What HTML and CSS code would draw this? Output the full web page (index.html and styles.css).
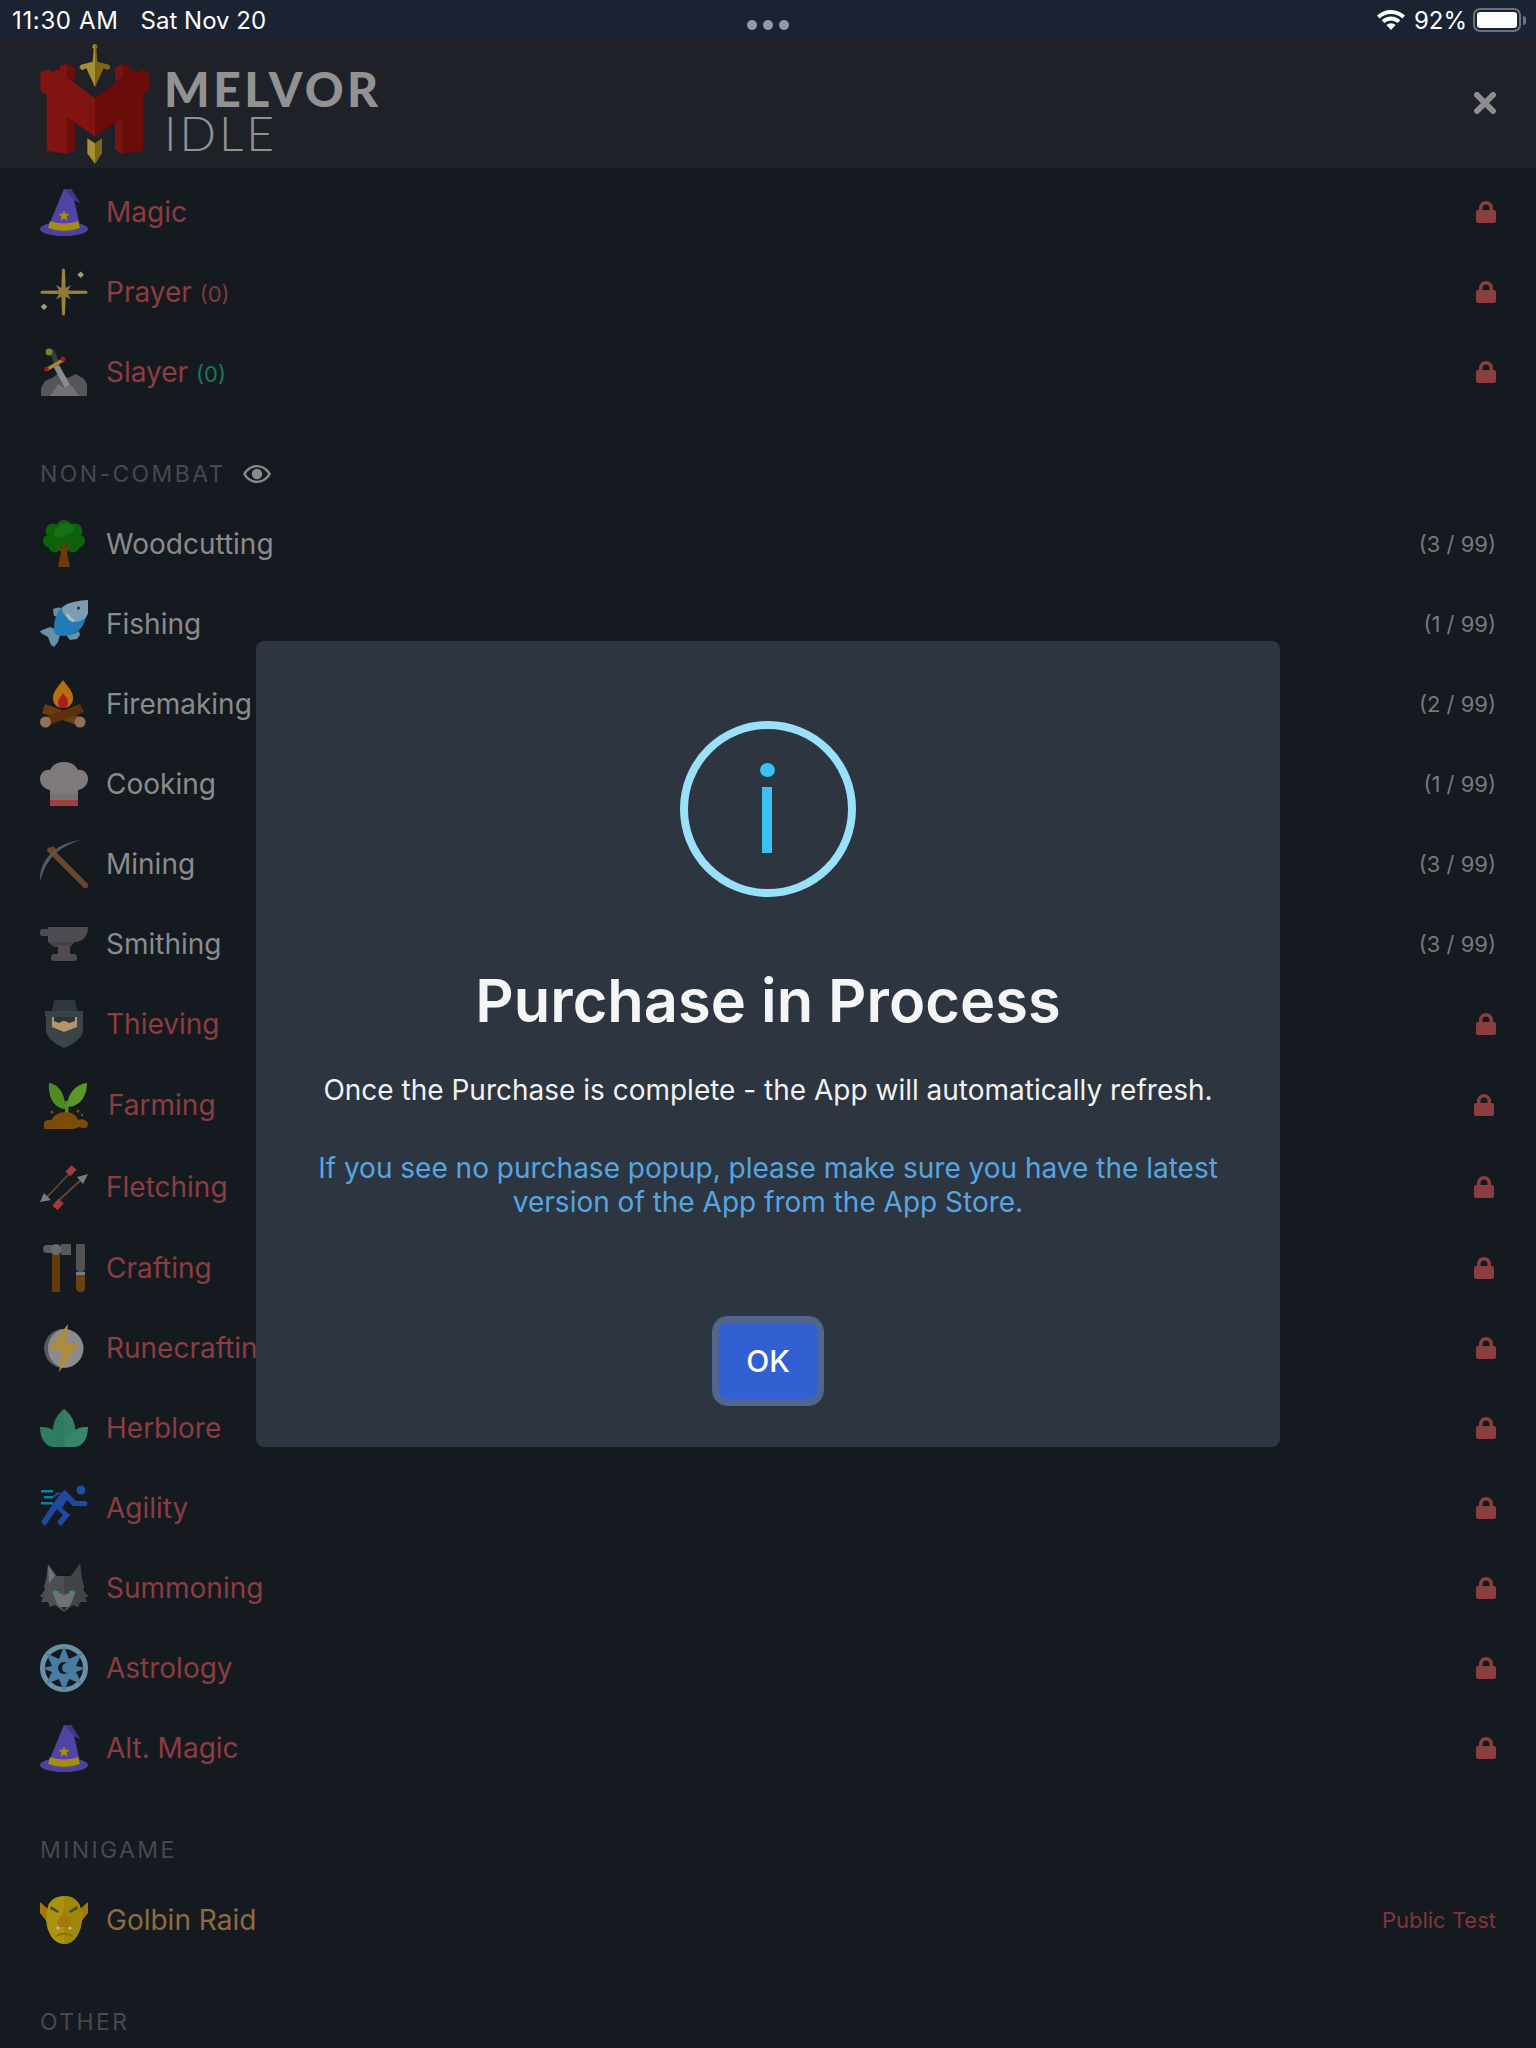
FILE: index.html
```html
<!DOCTYPE html>
<html lang="en">
<head>
<meta charset="utf-8">
<title>Melvor Idle</title>
<link rel="stylesheet" href="styles.css">
</head>
<body>
<svg class="defs" width="0" height="0" aria-hidden="true">
  <defs>
    <symbol id="i-lock" viewBox="0 0 20 22"><path fill="currentColor" d="M3 9V7a7 7 0 0 1 14 0v2h1a2 2 0 0 1 2 2v9a2 2 0 0 1-2 2H2a2 2 0 0 1-2-2v-9a2 2 0 0 1 2-2zm3.500 0h7V7a3.500 3.500 0 0 0-7 0z"/></symbol>
    <symbol id="i-magic" viewBox="0 0 48 48">
      <ellipse cx="24" cy="41" rx="24" ry="7" fill="#4d429c"/>
      <path d="M9 37 24 1h7l9 14-6-3 6 25q-16 6-31 0z" fill="#4f45a3"/>
      <path d="M24 1h7l9 14-6-3-4-5z" fill="#3f3688"/>
      <path d="M10 33q14 5 28 0l2 7q-16 6-32 0z" fill="#a58a18"/>
      <path d="m24 22 1.600 3.800 4 .3-3 2.700 1 4-3.600-2.200-3.600 2.200 1-4-3-2.700 4-.3z" fill="#a58a18"/>
    </symbol>
    <symbol id="i-prayer" viewBox="0 0 48 48">
      <path d="M22 2a1.500 1.500 0 0 1 3 0l.7 20.500L46 22.800a1.500 1.500 0 0 1 0 3l-20.300.3L25 46a1.500 1.500 0 0 1-3 0l-.7-19.900L2 25.800a1.500 1.500 0 0 1 0-3l19.300-.3z" fill="#9c843a"/>
      <path d="m23.500 15 2 5 5.500-3-3 5.500 5.500 1.800-5.500 1.800 3 5.500-5.500-3-2 5-2-5-5.500 3 3-5.500-5.500-1.800 5.500-1.800-3-5.500 5.500 3z" fill="#917a34"/>
      <path d="m40.700 3.500 3.300 3.300-3.300 3.300-3.300-3.300zM4 35.500l3.300 3.300L4 42.100.7 38.800z" fill="#a89c78"/>
    </symbol>
    <symbol id="i-slayer" viewBox="0 0 48 48">
      <path d="M1 48v-8l4-7 7-3 7-5 9 5 8-4 8 5 3 5v12z" fill="#56565a"/>
      <path d="M10 48l8-12 7 4 6-3 8 11z" fill="#727274"/>
      <path d="m13 18 5-3 12 22-5 3z" fill="#8a8a90"/>
      <path d="m9 2 5-.5 6 15-5 2z" fill="#3c3c40"/>
      <circle cx="9" cy="4" r="3.400" fill="#6f8a22"/>
      <path d="M6 20 23 10l1.500 3-17 10z" fill="#a98a26"/>
      <circle cx="6.500" cy="21" r="2.400" fill="#9c1c20"/><circle cx="23" cy="11" r="2.400" fill="#9c1c20"/>
    </symbol>
    <symbol id="i-wood" viewBox="0 0 48 48">
      <g fill="#0e620b">
        <circle cx="24" cy="8" r="8"/><circle cx="13" cy="11" r="7.500"/><circle cx="35" cy="11" r="7.500"/>
        <circle cx="9.500" cy="21" r="6.500"/><circle cx="38.500" cy="21" r="6.500"/><circle cx="24" cy="17" r="11"/>
        <circle cx="15" cy="26" r="6.500"/><circle cx="33" cy="26" r="6.500"/>
      </g>
      <path d="M22 4c6-2 11 0 13 3-2 5-8 8-14 10-5 1-8-1-7-5 1-3 4-6 8-8z" fill="#177215"/>
      <path d="M18 47l3-15-7-9 8 6 2-8 2 7 6-7-5 12 3 14z" fill="#6b3c09"/>
    </symbol>
    <symbol id="i-fish" viewBox="0 0 48 48">
      <path d="M17 30 10 27 0 31l1 2 7 4 3 8 3 2 4-5 2-7z" fill="#6a90a8"/>
      <path d="M14 16q-1-6-1-7 6-3 11 0l-4 8zM33 34l6-3 1 4-3 4-7 1-4-5z" fill="#6a90a8"/>
      <path d="M48 0C38 1 26 2 20 9 14 18 13 26 15 34c8 4 22 2 28-9 4-7 5-16 5-25z" fill="#1f7cb4"/>
      <path d="M48 0C38 1 28 2 22 8c0 6 4 8 8 13 8 3 16-1 18-8z" fill="#7b9cb3"/>
      <circle cx="38.500" cy="8" r="1.600" fill="#20303c"/>
      <path d="M28 13q2 5 7 7l-2 2q-5-2-7-7z" fill="#a8c0cf"/>
    </symbol>
    <symbol id="i-fire" viewBox="0 0 48 48">
      <path d="M23 0c4 6 10 11 10 18 0 6-4 10-10 10s-10-4-10-10c0-7 6-12 10-18z" fill="#b66f0c"/>
      <path d="M23 13c3 4 5 6 5 10 0 3-2 5-5 5s-5-2-5-5c0-4 3-6 5-10z" fill="#a81c1b"/>
      <path d="M5 24 44 38l-4 8L2 33z" fill="#6e3b0e"/>
      <path d="M40 24 3 38l4 8 37-14z" fill="#5c300b"/>
      <ellipse cx="5.500" cy="42" rx="5.500" ry="5.500" fill="#8f7358"/><ellipse cx="40" cy="42" rx="5.500" ry="5.500" fill="#8f7358"/>
    </symbol>
    <symbol id="i-cook" viewBox="0 0 48 48">
      <path d="M10 30C4 29 0 24 0 19c0-6 5-10 10-9 3-6 8-8 14-8s11 2 14 8c5-1 10 3 10 9 0 5-4 10-10 11v10H10z" fill="#7e797b"/>
      <path d="M10 34h28v6H10z" fill="#767173"/>
      <path d="M10 40h28v6H10z" fill="#a23c3d"/>
    </symbol>
    <symbol id="i-mine" viewBox="0 0 48 48">
      <path d="M10 10 45.500 45.500" stroke="#6d452a" stroke-width="5.500" stroke-linecap="round" fill="none"/>
      <path d="M0 41C-1 22 14 3 41 0 28 4 18 10 12 17 6 24 3 32 0 41z" fill="#4c5d5e"/>
      <path d="M10 9 14 13 17 10 13 6z" fill="#6d452a"/>
    </symbol>
    <symbol id="i-anvil" viewBox="0 0 48 48">
      <path d="M8 7h40c0 9-5 15-14 15H8v-6H2Q0 16 0 12.500T2 9h6z" fill="#4e4c51"/>
      <path d="M8 22h27l-5 5H14z" fill="#454349"/>
      <path d="M18 26h12v8H18z" fill="#4e4c51"/>
      <path d="M14 34h20q3 0 3 3.500T34 41H14q-3 0-3-3.500T14 34z" fill="#4e4c51"/>
    </symbol>
    <symbol id="i-thief" viewBox="0 0 48 48">
      <path d="M6 17h37v13c0 8-10 14-19 18C16 44 6 38 6 30z" fill="#3a4548"/>
      <path d="M12 17h25v10l-13 5-12-5z" fill="#b8936a"/>
      <path d="M14 17h21v4l-6 2-4-2h-2l-4 2-5-2z" fill="#2a3336"/>
      <path d="M14 0h21l2 11H12z" fill="#2f393c"/>
      <path d="M5 11h38v6H5z" fill="#384346"/>
    </symbol>
    <symbol id="i-farm" viewBox="0 0 48 48">
      <path d="M25 20h3.500v14H25z" fill="#4f8a22"/>
      <path d="M25 28C26 16 20 3 9 2c-1 13 4 25 16 26z" fill="#4f8a22"/>
      <path d="M27 26C27 13 36 3 47 2c0 13-7 24-20 24z" fill="#5a9628"/>
      <path d="M4 43q0-4 5-4 1 0 2 .5Q15 31 26 31q9 0 12 8 2-1 5-.5 5 1 5 4.500 0 4-4 4-3 0-5-1-8 4-18 3-4 1-6 0-3 2-8 1-3-1-3-4z" fill="#7a4c08"/>
      <circle cx="12" cy="31" r="1.500" fill="#7a4c08"/><circle cx="38" cy="30" r="1.500" fill="#7a4c08"/><circle cx="42" cy="34" r="1.200" fill="#7a4c08"/>
    </symbol>
    <symbol id="i-fletch" viewBox="0 0 48 48">
      <path d="M6 35 30 10M42 16 18 38" stroke="#6a4233" stroke-width="1.800" fill="none"/>
      <path d="M0 39 4 30l7 7zM48 11 37 14l6 7z" fill="#7c7c7e"/>
      <path d="M28 11 34 4.500M21 38 15 45" stroke="#a43a3c" stroke-width="7" fill="none"/>
    </symbol>
    <symbol id="i-craft" viewBox="0 0 48 48">
      <path d="M12 4h8v44h-8z" fill="#643c0c"/>
      <path d="M7 1h12v8H7a4 4 0 0 1 0-8z" fill="#5c5c5e"/>
      <path d="M21 0h10v11H21z" fill="#58585a"/><circle cx="16" cy="5.500" r="5.500" fill="#6a6a6c"/>
      <path d="M36 0h9v25l-2 3h-5l-2-3z" fill="#525254"/>
      <path d="M36 28h9v3h-9z" fill="#7a7a7c"/>
      <path d="M36 31h9v13q0 4-4.500 4T36 44z" fill="#6b4210"/>
    </symbol>
    <symbol id="i-rune" viewBox="0 0 48 48">
      <circle cx="24" cy="24.500" r="19.500" fill="#8b8b8d"/>
      <path d="M4.500 24.500C4.500 13.500 13 5 24 5 15 6.500 8 13.500 8 24.500S15 42.500 24 44C13 44 4.500 35.500 4.500 24.500z" fill="#58585a"/>
      <path d="M28 0 9 25h13l-3 23 20-29H26z" fill="#ad8c3c"/>
    </symbol>
    <symbol id="i-herb" viewBox="0 0 48 48">
      <path d="M24 5c9 7 13 17 10 27L24 43 14 32C11 22 15 12 24 5z" fill="#2d7a5f"/>
      <path d="M24 5c9 7 13 17 10 27L24 43z" fill="#347f65"/>
      <path d="M0 23c10-1 20 4 24 20h-10C5 43 0 34 0 23z" fill="#2f7d60"/>
      <path d="M48 23c-10-1-20 4-24 20h10c9 0 14-9 14-20z" fill="#398769"/>
    </symbol>
    <symbol id="i-agility" viewBox="0 0 48 48">
      <circle cx="41" cy="6" r="4.500" fill="#1f4fa6"/>
      <path d="M15 13 25 6l11 11h9a2.500 2.500 0 0 1 0 5H33l-6-6-5 8 8 7-9 11-4-4 6-7-6-6-12 17-4-4 12-18 8-11-3-1-8 6z" fill="#1f4aa0"/>
      <path d="M1 6h12v2.500H1zM4 12h9v2.500H4zM1 18h12v2.500H1z" fill="#12809a"/>
    </symbol>
    <symbol id="i-wolf" viewBox="0 0 48 48">
      <path d="M8 0l9 12h14l9-12 2 16 2 6-1 4 5 6-3 2 2 4h-7l-2 5-5-2-9 7-9-7-5 2-2-5H1l2-4-3-2 5-6-1-4 2-6z" fill="#4d4e52"/>
      <path d="M8 1l7 11-6 7zM40 1l-7 11 6 7z" fill="#747475"/>
      <path d="M24 12h7l9-12 2 16 2 6-1 4 5 6-3 2 2 4h-7l-2 5-5-2-9 7z" fill="#434448"/>
      <path d="M12 27l12 4 12-4-5 13-7 7-7-7z" fill="#707173"/>
      <path d="m21 43h6l-3 4z" fill="#26272b"/>
      <path d="M14 26l6 2-4 1.500zM34 26l-6 2 4 1.500z" fill="#1a9aa8"/>
    </symbol>
    <symbol id="i-astro" viewBox="0 0 48 48">
      <circle cx="24" cy="24" r="21.500" fill="none" stroke="#6b90a6" stroke-width="5"/>
      <path d="m24 2 5 13 13-6-6 13 10 2-10 4 6 12-13-5-5 13-5-13-13 5 6-12-10-4 10-2L6 9l13 6z" fill="#4a7ba0"/>
      <circle cx="24" cy="24" r="6" fill="#151a21"/>
      <circle cx="27" cy="24" r="5" fill="#4a7ba0"/>
    </symbol>
    <symbol id="i-goblin" viewBox="0 0 48 48">
      <path d="M8 13 0 6v11l8 10zM40 13l8-7v11l-8 10z" fill="#a5780a"/>
      <path d="M24 0c8 0 14 4 16 10 2 8 3 18-1 26-3 8-9 12-15 12S12 44 9 36c-4-8-3-18-1-26C10 4 16 0 24 0z" fill="#ac930e"/>
      <path d="M24 0c8 0 14 4 16 10 2 8 3 18-1 26-3 8-9 12-15 12z" fill="#a08808"/>
      <path d="m24 14 7 12-2 5H19l-2-5z" fill="#a37a0a"/>
      <path d="m11 10 8 5-1 2-8-4zM37 10l-8 5 1 2 8-4z" fill="#4b4b3a"/>
      <path d="M15 40q9-7 18 0l-1 1q-8-5-16 0z" fill="#8c6a08"/>
      <circle cx="18" cy="32" r="1.600" fill="#c0bfa8"/><circle cx="30" cy="32" r="1.600" fill="#c0bfa8"/>
    </symbol>
  </defs>
</svg>

<div class="status">
  <div class="status-left"><span class="clock">11:30 AM</span><span>Sat Nov 20</span></div>
  <div class="status-dots"><i></i><i></i><i></i></div>
  <div class="status-right">
    <svg class="wifi" viewBox="0 0 28 20"><path fill="#fff" d="M14 0c5.400 0 10.300 2.100 14 5.600l-2.600 2.800A16.500 16.500 0 0 0 14 3.900 16.500 16.500 0 0 0 2.600 8.400L0 5.600A20.300 20.300 0 0 1 14 0zm0 6.600c3.600 0 6.800 1.400 9.300 3.700l-2.700 2.800A9.800 9.800 0 0 0 14 10.500a9.800 9.800 0 0 0-6.600 2.600l-2.700-2.800A13.600 13.600 0 0 1 14 6.600zm0 6.700c1.800 0 3.400.7 4.600 1.800L14 20l-4.600-4.900a6.800 6.800 0 0 1 4.600-1.800z"/></svg>
    <span>92%</span>
    <div class="battery"><div class="battery-fill"></div></div>
    <div class="battery-nub"></div>
  </div>
</div>

<header class="head">
  <svg class="logo" viewBox="0 0 390 384">
    <path d="M195 12a8 8 0 0 1 4 15l3 38 35 9 5 8-8 9-13-6-26 57z" fill="#7e6516"/>
    <path d="M195 12a8 8 0 0 0-4 15l-3 38-35 9-5 8 8 9 13-6 26 57z" fill="#a68e32"/>
    <path d="M172 295l23 15v62l-23-32z" fill="#a68e32"/><path d="M216 295l-21 15v62l21-32z" fill="#7e6516"/>
    <path d="M195 175 112 112V71L90 78v14l-10-8v8l-20 4v-8l-8 1-21 6v58l19 10v170l62 8V232l83 58z" fill="#7f1410"/>
    <path d="M195 175l83-63V71l22 7v14l10-8v8l20 4v-8l8 1 21 6v58l-19 10v170l-62 8V232l-83 58z" fill="#6a0c09"/>
    <path d="M112 71l23 14v40l-23-13zM112 232l23 18v80l-23 13z" fill="#6a0e0b"/>
    <path d="M278 71l-23 14v40l23-13zM278 232l-23 18v80l23 13z" fill="#7a1410"/>
  </svg>
  <div class="brand"><span class="brand-top">MELVOR</span><span class="brand-bot">IDLE</span></div>
  <svg class="close" viewBox="0 0 22 22"><path d="M3 3 19 19M19 3 3 19" stroke="#8d8d8d" stroke-width="6" stroke-linecap="round"/></svg>
</header>

<main class="list">
  <div class="row"><svg class="ico"><use href="#i-magic"/></svg><span class="name locked">Magic</span><svg class="lock"><use href="#i-lock"/></svg></div>
  <div class="row"><svg class="ico"><use href="#i-prayer"/></svg><span class="name locked">Prayer <small class="pts">(0)</small></span><svg class="lock"><use href="#i-lock"/></svg></div>
  <div class="row"><svg class="ico"><use href="#i-slayer"/></svg><span class="name locked">Slayer <small class="pts green">(0)</small></span><svg class="lock"><use href="#i-lock"/></svg></div>

  <h2 class="sect">NON-COMBAT <svg class="eye" viewBox="0 0 28 18"><path fill="#8a8a8a" fill-rule="evenodd" d="M14 0c6 0 11 3.500 14 9-3 5.500-8 9-14 9S3 14.500 0 9c3-5.500 8-9 14-9zm0 2.300C9.500 2.300 5.500 4.800 2.800 9c2.700 4.200 6.700 6.700 11.200 6.700S22.500 13.200 25.200 9C22.500 4.800 18.500 2.300 14 2.300zM14 3.800a5.200 5.200 0 1 1 0 10.400 5.200 5.200 0 0 1 0-10.400z"/></svg></h2>
  <div class="row"><svg class="ico"><use href="#i-wood"/></svg><span class="name">Woodcutting</span><span class="lvl">(3 / 99)</span></div>
  <div class="row"><svg class="ico"><use href="#i-fish"/></svg><span class="name">Fishing</span><span class="lvl">(1 / 99)</span></div>
  <div class="row"><svg class="ico"><use href="#i-fire"/></svg><span class="name">Firemaking</span><span class="lvl">(2 / 99)</span></div>
  <div class="row"><svg class="ico"><use href="#i-cook"/></svg><span class="name">Cooking</span><span class="lvl">(1 / 99)</span></div>
  <div class="row"><svg class="ico"><use href="#i-mine"/></svg><span class="name">Mining</span><span class="lvl">(3 / 99)</span></div>
  <div class="row"><svg class="ico"><use href="#i-anvil"/></svg><span class="name">Smithing</span><span class="lvl">(3 / 99)</span></div>
  <div class="row"><svg class="ico"><use href="#i-thief"/></svg><span class="name locked">Thieving</span><svg class="lock"><use href="#i-lock"/></svg></div>
  <div class="row row-farm"><svg class="ico"><use href="#i-farm"/></svg><span class="name locked">Farming</span><svg class="lock"><use href="#i-lock"/></svg></div>
  <div class="row row-fletch"><svg class="ico"><use href="#i-fletch"/></svg><span class="name locked">Fletching</span><svg class="lock"><use href="#i-lock"/></svg></div>
  <div class="row row-craft"><svg class="ico"><use href="#i-craft"/></svg><span class="name locked">Crafting</span><svg class="lock"><use href="#i-lock"/></svg></div>
  <div class="row"><svg class="ico"><use href="#i-rune"/></svg><span class="name locked">Runecrafting</span><svg class="lock"><use href="#i-lock"/></svg></div>
  <div class="row"><svg class="ico"><use href="#i-herb"/></svg><span class="name locked">Herblore</span><svg class="lock"><use href="#i-lock"/></svg></div>
  <div class="row"><svg class="ico"><use href="#i-agility"/></svg><span class="name locked">Agility</span><svg class="lock"><use href="#i-lock"/></svg></div>
  <div class="row"><svg class="ico"><use href="#i-wolf"/></svg><span class="name locked">Summoning</span><svg class="lock"><use href="#i-lock"/></svg></div>
  <div class="row"><svg class="ico"><use href="#i-astro"/></svg><span class="name locked">Astrology</span><svg class="lock"><use href="#i-lock"/></svg></div>
  <div class="row"><svg class="ico"><use href="#i-magic"/></svg><span class="name locked">Alt. Magic</span><svg class="lock"><use href="#i-lock"/></svg></div>

  <h2 class="sect">MINIGAME</h2>
  <div class="row"><svg class="ico"><use href="#i-goblin"/></svg><span class="name gold">Golbin Raid</span><span class="lvl test">Public Test</span></div>

  <h2 class="sect">OTHER</h2>
</main>

<section class="modal">
  <div class="info"><span class="info-dot"></span><span class="info-bar"></span></div>
  <h1 class="title">Purchase in Process</h1>
  <p class="msg">Once the Purchase is complete - the App will automatically refresh.</p>
  <p class="note">If you see no purchase popup, please make sure you have the latest<br>version of the App from the App Store.</p>
  <button class="ok">OK</button>
</section>
</body>
</html>
```

FILE: styles.css
```css
* { box-sizing: border-box; }
html, body { margin: 0; padding: 0; }
body {
  position: relative;
  width: 1536px;
  height: 2048px;
  overflow: hidden;
  background: #151a21;
  font-family: Inter, "Liberation Sans", sans-serif;
}
.defs { position: absolute; }

.status {
  height: 40px;
  background: #1b2231;
  color: #fff;
  display: flex;
  align-items: center;
  justify-content: space-between;
  padding: 0 10px 0 12px;
  position: relative;
  font-size: 24px;
}
.status-left { display: flex; gap: 22px; }
.clock { letter-spacing: 0.650px; }
.status-dots {
  position: absolute;
  left: 747px;
  top: 20px;
  display: flex;
  gap: 6px;
}
.status-dots i { width: 10px; height: 10px; border-radius: 50%; background: #9298a8; }
.status-right { display: flex; align-items: center; }
.wifi { width: 28px; height: 20px; margin-right: 9px; }
.battery {
  width: 48px;
  height: 24px;
  margin-left: 6px;
  border: 2px solid #6d7280;
  border-radius: 7px;
  padding: 2px;
}
.battery-fill { width: 100%; height: 100%; background: #fff; border-radius: 3px; }
.battery-nub { width: 3px; height: 9px; margin-left: 2px; background: #6d7280; border-radius: 0 3px 3px 0; }

.head {
  height: 128px;
  background: #1e2127;
  display: flex;
  align-items: center;
  padding: 0 40px 0 30px;
}
.logo { width: 130px; height: 128px; }
.brand { display: flex; flex-direction: column; margin-left: 4px; color: #929292; margin-top: 13px; }
.brand-top { font-family: Lato, sans-serif; font-weight: 900; font-size: 48px; line-height: 44px; letter-spacing: 3.500px; }
.brand-bot { font-family: Lato, sans-serif; font-weight: 300; font-size: 48px; line-height: 44px; letter-spacing: 3px; }
.close { width: 22px; height: 22px; margin-left: auto; margin-top: -2px; }

.list { padding: 4px 40px 0; }
.row {
  height: 80px;
  display: flex;
  align-items: center;
}
.ico { width: 48px; height: 48px; flex: none; margin-right: 18px; }
.name { font-size: 28px; color: #8a8b8d; }
.name.locked { color: #8b3d3f; }
.name.gold { color: #8f6b3e; }
.pts { font-size: 22px; color: #7e3a3c; }
.pts.green { color: #17795a; }
.lvl { margin-left: auto; font-size: 22px; color: #77797c; }
.lvl.test { color: #803639; }
.lock { width: 20px; height: 22px; margin-left: auto; color: #8b3d3f; }

.row-farm { margin-top: 1px; }
.row-farm .ico { margin-right: 20px; }
.row-fletch { margin-top: 2px; }
.row-craft { margin-top: 1px; }
.row-farm .lock, .row-fletch .lock, .row-craft .lock { margin-right: 2px; }

.sect {
  margin: 32px 0 0;
  height: 60px;
  font-size: 23px;
  line-height: 30px;
  font-weight: 400;
  letter-spacing: 2.400px;
  color: #46494e;
  display: flex;
  align-items: center;
}
.eye { width: 28px; height: 18px; margin-left: 17px; }

.modal {
  position: absolute;
  left: 256px;
  top: 641px;
  width: 1024px;
  height: 806px;
  background: #2d3540;
  border-radius: 8px;
  padding-top: 80px;
  display: flex;
  flex-direction: column;
  align-items: center;
  text-align: center;
}
.info {
  width: 176px;
  height: 176px;
  border: 8px solid #99e1f9;
  border-radius: 50%;
  display: flex;
  flex-direction: column;
  align-items: center;
  padding-top: 34px;
  padding-right: 2px;
  flex: none;
}
.info-dot { width: 15px; height: 14px; border-radius: 50%; background: #3ac2f0; }
.info-bar { width: 10px; height: 66px; margin-top: 10px; background: #3ac2f0; }
.title { margin: 67px 0 0; font-size: 59.600px; line-height: 72px; font-weight: 600; color: #f5f5f5; }
.msg { margin: 37px 0 0; font-size: 28px; line-height: 34px; color: #f2f2f2; }
.note { margin: 44px 0 0; font-size: 28px; line-height: 34px; color: #56a6e0; }
.ok {
  margin-top: 104px;
  width: 98px;
  height: 76px;
  border: 0;
  border-radius: 8px;
  background: #3260d2;
  box-shadow: 0 0 0 6px #52658f;
  outline: 1px solid #52658f;
  outline-offset: 6px;
  color: #fff;
  font-family: Inter, "Liberation Sans", sans-serif;
  font-size: 30px;
  font-weight: 500;
}
```
